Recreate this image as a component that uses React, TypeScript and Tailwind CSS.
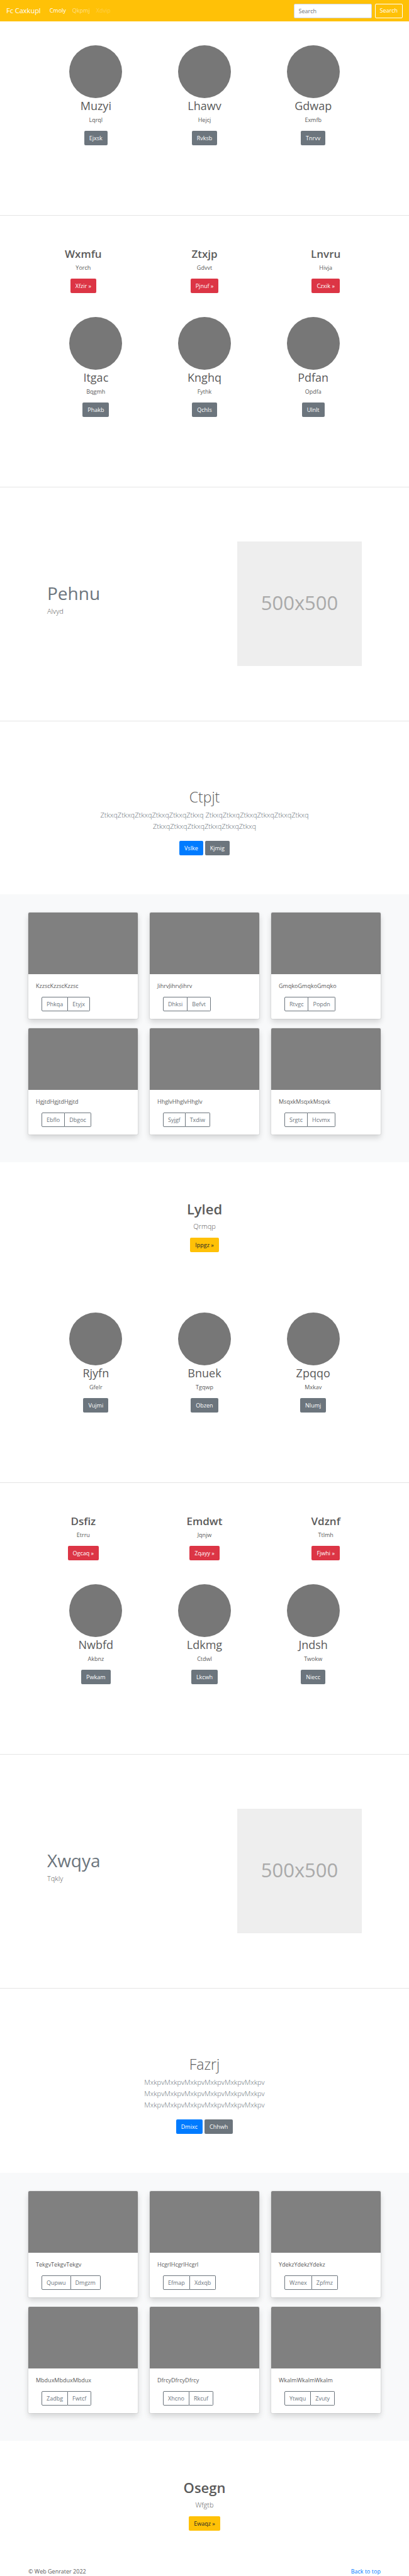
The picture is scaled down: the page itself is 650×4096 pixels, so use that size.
import React from "react";

type Item = { title: string; text: string; action: string };
type CardItem = { text: string; actions: [string, string] };

const buttonColors = {
  gray: "bg-[#6c757d] text-white",
  red: "bg-[#dc3545] text-white",
  blue: "bg-[#007bff] text-white",
  yellow: "bg-[#ffc107] text-[#212529]",
};

function Button({ color, children }: { color: keyof typeof buttonColors; children: React.ReactNode }) {
  return (
    <button type="button" className={`h-[23px] rounded-[2px] px-2 text-[9px] leading-[14px] ${buttonColors[color]}`}>
      {children}
    </button>
  );
}

function Navbar() {
  return (
    <nav className="flex h-[34px] items-center bg-[#ffc107] px-[10px] text-white">
      <a href="#" className="mr-[14px] text-[11px] leading-[18px]">
        Fc Caxkupl
      </a>
      <div className="flex flex-1 gap-[10px] text-[9px] leading-[14px]">
        <a href="#">Cmoly</a>
        <a href="#" className="text-white/50">
          Qkpmj
        </a>
        <a href="#" className="text-white/25">
          Xdvip
        </a>
      </div>
      <form className="flex gap-[5px] text-[9px] leading-[14px]" onSubmit={(e) => e.preventDefault()}>
        <input
          type="search"
          aria-label="Search"
          placeholder="Search"
          className="h-[23px] w-[124px] rounded-[2px] border border-[#ced4da] bg-white px-[7px] text-[#495057] placeholder:text-[#6c757d]"
        />
        <button type="submit" className="h-[23px] rounded-[2px] border border-white px-[7px]">
          Search
        </button>
      </form>
    </nav>
  );
}

function Profiles({ items }: { items: Item[] }) {
  return (
    <section className="grid grid-cols-3 px-[66px] pt-[38px] pb-[111px] text-center">
      {items.map((item) => (
        <div key={item.title} className="flex flex-col items-center">
          <div className="size-[84px] rounded-full bg-[#777]" />
          <h2 className="mb-[3px] text-[18px] leading-[25px]">{item.title}</h2>
          <p className="mb-[10px] text-[9px] leading-[14px]">{item.text}</p>
          <Button color="gray">{item.action}</Button>
        </div>
      ))}
    </section>
  );
}

function Highlights({ items }: { items: Item[] }) {
  return (
    <section className="grid grid-cols-3 px-9 pt-12 text-center">
      {items.map((item) => (
        <div key={item.title} className="flex flex-col items-center">
          <h2 className="mb-[3px] text-[17px] leading-[25px] font-semibold">{item.title}</h2>
          <p className="mb-[10px] text-[9px] leading-[14px]">{item.text}</p>
          <Button color="red">{item.action} »</Button>
        </div>
      ))}
    </section>
  );
}

function Feature({ title, text }: { title: string; text: string }) {
  return (
    <section className="flex justify-between px-[75px] pt-[86px] pb-[87px]">
      <div className="pt-[67px]">
        <h2 className="mb-[5px] text-[28px] leading-[30px] text-[#6c757d]">{title}</h2>
        <p className="text-[11px] leading-[18px] font-light">{text}</p>
      </div>
      <div className="flex size-[198px] items-center justify-center bg-[#eee] pb-1 text-[31px] text-[#aaa]">
        500x500
      </div>
    </section>
  );
}

function Intro({ title, text, actions }: { title: string; text: string; actions: [string, string] }) {
  return (
    <section className="mx-auto max-w-[370px] pt-[106px] pb-[62px] text-center">
      <h1 className="mb-[5px] text-[23px] leading-[29px] font-light">{title}</h1>
      <p className="mb-[14px] text-[11px] leading-[18px] font-light text-[#6c757d]">{text}</p>
      <div className="flex justify-center gap-[3px]">
        <Button color="blue">{actions[0]}</Button>
        <Button color="gray">{actions[1]}</Button>
      </div>
    </section>
  );
}

function Cards({ items }: { items: CardItem[] }) {
  return (
    <section className="grid grid-cols-3 gap-x-[19px] gap-y-[15px] bg-[#f8f9fa] px-[45px] pt-[29px] pb-11">
      {items.map((item) => (
        <article
          key={item.text}
          className="overflow-hidden rounded-[2px] bg-white shadow-[0_5px_10px_rgba(0,0,0,0.15),0_0_0_1px_rgba(0,0,0,0.06)]"
        >
          <div className="h-[98px] bg-[#808080]" />
          <div className="p-3">
            <p className="mb-[10px] text-[9px] leading-[14px]">{item.text}</p>
            <div className="ml-[9px] flex text-[9px] leading-[14px] text-[#6c757d]">
              <button type="button" className="h-[23px] rounded-l-[2px] border border-[#6c757d] px-[7px]">
                {item.actions[0]}
              </button>
              <button type="button" className="h-[23px] rounded-r-[2px] border border-l-0 border-[#6c757d] px-[7px]">
                {item.actions[1]}
              </button>
            </div>
          </div>
        </article>
      ))}
    </section>
  );
}

function CallToAction({ title, text, action }: Item) {
  return (
    <section className="flex flex-col items-center pt-[59px] pb-[58px]">
      <h1 className="mb-[4px] text-[22px] leading-[30px] font-semibold">{title}</h1>
      <p className="mb-[9px] text-[11px] leading-[18px] font-light">{text}</p>
      <Button color="yellow">{action} »</Button>
    </section>
  );
}

function Divider() {
  return <hr className="border-t border-[#e5e5e5]" />;
}

export default function App() {
  return (
    <div className="bg-white font-['Open_Sans','Noto_Sans',sans-serif] text-[#5a5a5a]">
      <Navbar />
      <Profiles
        items={[
          { title: "Muzyi", text: "Lqrql", action: "Ejxsk" },
          { title: "Lhawv", text: "Hejcj", action: "Rvksb" },
          { title: "Gdwap", text: "Exmfb", action: "Tnrvv" },
        ]}
      />
      <Divider />
      <Highlights
        items={[
          { title: "Wxmfu", text: "Yorch", action: "Xfzir" },
          { title: "Ztxjp", text: "Gdvvt", action: "Pjnuf" },
          { title: "Lnvru", text: "Hivja", action: "Czxik" },
        ]}
      />
      <Profiles
        items={[
          { title: "Itgac", text: "Bqgmh", action: "Phakb" },
          { title: "Knghq", text: "Fythk", action: "Qchls" },
          { title: "Pdfan", text: "Opdfa", action: "Ulnlt" },
        ]}
      />
      <Divider />
      <Feature title="Pehnu" text="Alvyd" />
      <Divider />
      <Intro
        title="Ctpjt"
        text="ZtkxqZtkxqZtkxqZtkxqZtkxqZtkxq ZtkxqZtkxqZtkxqZtkxqZtkxqZtkxq ZtkxqZtkxqZtkxqZtkxqZtkxqZtkxq"
        actions={["Vslke", "Kjmig"]}
      />
      <Cards
        items={[
          { text: "KzzscKzzscKzzsc", actions: ["Phkqa", "Etyjx"] },
          { text: "JihrvJihrvJihrv", actions: ["Dhksi", "Befvt"] },
          { text: "GmqkoGmqkoGmqko", actions: ["Rtvgc", "Popdn"] },
          { text: "HgjtdHgjtdHgjtd", actions: ["Ebflo", "Dbgoc"] },
          { text: "HhglvHhglvHhglv", actions: ["Syjgf", "Txdiw"] },
          { text: "MsqxkMsqxkMsqxk", actions: ["Srgtc", "Hcvmx"] },
        ]}
      />
      <CallToAction title="Lyled" text="Qrmqp" action="Ippgz" />
      <Profiles
        items={[
          { title: "Rjyfn", text: "Gfelr", action: "Vujmi" },
          { title: "Bnuek", text: "Tgqwp", action: "Obzen" },
          { title: "Zpqqo", text: "Mxkav", action: "Nlumj" },
        ]}
      />
      <Divider />
      <Highlights
        items={[
          { title: "Dsfiz", text: "Etrru", action: "Ogcaq" },
          { title: "Emdwt", text: "Jqnjw", action: "Zqayy" },
          { title: "Vdznf", text: "Ttlmh", action: "Fjwhi" },
        ]}
      />
      <Profiles
        items={[
          { title: "Nwbfd", text: "Akbnz", action: "Pwkam" },
          { title: "Ldkmg", text: "Ctdwl", action: "Lkcwh" },
          { title: "Jndsh", text: "Twokw", action: "Niecc" },
        ]}
      />
      <Divider />
      <Feature title="Xwqya" text="Tqkly" />
      <Divider />
      <Intro
        title="Fazrj"
        text="MxkpvMxkpvMxkpvMxkpvMxkpvMxkpv MxkpvMxkpvMxkpvMxkpvMxkpvMxkpv MxkpvMxkpvMxkpvMxkpvMxkpvMxkpv"
        actions={["Dmixc", "Chhwh"]}
      />
      <Cards
        items={[
          { text: "TekgvTekgvTekgv", actions: ["Qupwu", "Dmgzm"] },
          { text: "HcgrlHcgrlHcgrl", actions: ["Efmap", "Xdxqb"] },
          { text: "YdekzYdekzYdekz", actions: ["Wznex", "Zpfmz"] },
          { text: "MbduxMbduxMbdux", actions: ["Zadbg", "Fwtcf"] },
          { text: "DfrcyDfrcyDfrcy", actions: ["Xhcno", "Rkcuf"] },
          { text: "WkalmWkalmWkalm", actions: ["Ytwqu", "Zvuty"] },
        ]}
      />
      <CallToAction title="Osegn" text="Wfgtb" action="Ewaqz" />
      <footer className="flex justify-between px-[45px] text-[9px] leading-[14px]">
        <p>© Web Genrater 2022</p>
        <a href="#" className="text-[#007bff]">
          Back to top
        </a>
      </footer>
    </div>
  );
}
